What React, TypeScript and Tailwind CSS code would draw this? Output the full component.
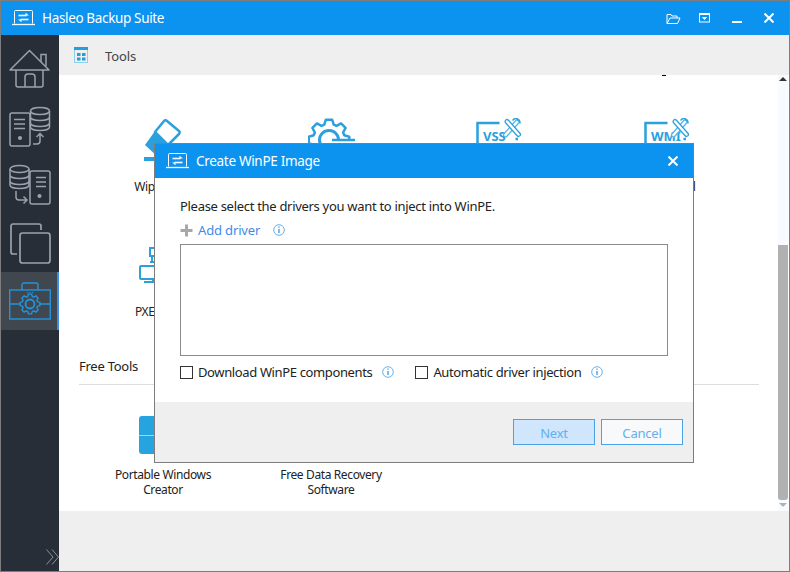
import type { ReactNode } from "react";

const font = "font-['Noto_Sans',sans-serif]";

// builds a cog outline, good enough for the toolbox and the gear tool
function gearPath(cx: number, cy: number, outer: number, inner: number, teeth: number) {
  const step = (Math.PI * 2) / teeth;
  const pts: string[] = [];
  for (let i = 0; i < teeth; i++) {
    const a = i * step - Math.PI / 2;
    const list: [number, number][] = [
      [inner, a - step * 0.38],
      [outer, a - step * 0.2],
      [outer, a + step * 0.2],
      [inner, a + step * 0.38],
    ];
    for (const [r, t] of list) {
      pts.push(`${(cx + r * Math.cos(t)).toFixed(2)} ${(cy + r * Math.sin(t)).toFixed(2)}`);
    }
  }
  return `M${pts.join("L")}Z`;
}

function LaptopIcon() {
  return (
    <svg width="23" height="16" viewBox="0 0 23 16" fill="none" stroke="white" strokeWidth="1">
      <path d="M2.500 13.500V1.500a1 1 0 0 1 1-1h16a1 1 0 0 1 1 1v12" />
      <path d="M0 14.500h23" strokeWidth="1.300" />
      <path d="M6.500 5.500h8" strokeWidth="1.600" />
      <path d="M13.500 2.800 17 5.500h-3.500z" fill="white" stroke="none" />
      <path d="M8.500 9.500h8" strokeWidth="1.600" />
      <path d="M9.500 12.200 6 9.500h3.500z" fill="white" stroke="none" />
    </svg>
  );
}

function HomeIcon() {
  return (
    <svg width="42" height="40" viewBox="0 0 42 40" fill="none" stroke="#9aa3ad" strokeWidth="1.500">
      <path d="M1 21 20.500 1.500 40 21H1Z" strokeLinejoin="round" />
      <path d="M32 13V5.500h5V17" />
      <path d="M7 21v15a2 2 0 0 0 2 2h23a2 2 0 0 0 2-2V21" />
      <path d="M16 38V28a3 3 0 0 1 3-3h4a3 3 0 0 1 3 3v10" />
    </svg>
  );
}

function ServerDbIcon() {
  return (
    <svg width="42" height="42" viewBox="0 0 42 42" fill="none" stroke="#9aa3ad" strokeWidth="1.500">
      <rect x="1" y="7" width="20" height="33" rx="2" />
      <path d="M5 13.500h11M5 18h11M5 22.500h11" />
      <circle cx="11" cy="32" r="1.300" fill="#9aa3ad" />
      <path d="M21.500 5c0-2 4-3.500 9.500-3.500s9.500 1.500 9.500 3.500-4 3.500-9.500 3.500-9.500-1.500-9.500-3.500z" fill="#272e38" />
      <path d="M21.500 5v16c0 2 4 3.500 9.500 3.500s9.500-1.500 9.500-3.500V5M21.500 11c0 2 4 3.500 9.500 3.500s9.500-1.500 9.500-3.500M21.500 17c0 2 4 3.500 9.500 3.500s9.500-1.500 9.500-3.500" />
      <path d="M24 38h4a3 3 0 0 0 3-3v-7M27.500 31l3.500-3.500 3.500 3.500" />
    </svg>
  );
}

function DbServerIcon() {
  return (
    <svg width="42" height="42" viewBox="0 0 42 42" fill="none" stroke="#9aa3ad" strokeWidth="1.500">
      <ellipse cx="10.500" cy="5" rx="9.500" ry="3.500" />
      <path d="M1 5v16c0 2 4 3.500 9.500 3.500S20 23 20 21V5M1 11c0 2 4 3.500 9.500 3.500S20 13 20 11M1 17c0 2 4 3.500 9.500 3.500S20 19 20 17" />
      <rect x="21" y="7" width="20" height="33" rx="2" />
      <path d="M27 13.500h10M27 18h10M27 22.500h10" />
      <circle cx="30.500" cy="32" r="1.300" fill="#9aa3ad" />
      <path d="M7 27v6a3 3 0 0 0 3 3h8M14.500 32.500 18 36l-3.500 3.500" />
    </svg>
  );
}

function CopyIcon() {
  return (
    <svg width="41" height="41" viewBox="0 0 41 41" fill="none" stroke="#9aa3ad" strokeWidth="1.700">
      <path d="M7 31H3a2 2 0 0 1-2-2V3a2 2 0 0 1 2-2h26a2 2 0 0 1 2 2v4" />
      <rect x="10" y="10" width="30" height="30" rx="2.500" />
    </svg>
  );
}

function ToolboxIcon() {
  return (
    <svg width="42" height="38" viewBox="0 0 42 38" fill="none" stroke="#2394dc" strokeWidth="1.400">
      <path d="M13 8V3a2 2 0 0 1 2-2h12a2 2 0 0 1 2 2v5" />
      <rect x="0.700" y="8" width="40.600" height="29" />
      <path d="M1 22h10M31 22h10" />
      <path d="M18 10.500h1.200M20.500 10.500h1.200M23 10.500h1.200" strokeWidth="1" />
      <path d={gearPath(21, 22, 10, 7.800, 8)} />
      <circle cx="21" cy="22" r="4.500" strokeWidth="1.800" />
    </svg>
  );
}

function InfoIcon() {
  return (
    <svg width="12" height="12" viewBox="0 0 12 12" fill="none">
      <circle cx="6" cy="6" r="5.300" stroke="#63b2f0" />
      <path d="M6 5v4M6 2.500v1.200" stroke="#2f8fe0" strokeWidth="1.200" />
    </svg>
  );
}

function EraserIcon() {
  return (
    <svg width="38" height="44" viewBox="0 0 38 44" fill="none">
      <path d="M11 14 20 3a2 2 0 0 1 3 0l12 10a2 2 0 0 1 0 3L24 27z" stroke="#2ba0dd" strokeWidth="2.500" strokeLinejoin="round" />
      <path d="M11 13 25 27 14 39 1 27z" fill="#2ba0dd" />
      <path d="M0 41h36" stroke="#2ba0dd" strokeWidth="4" />
    </svg>
  );
}

function GearIcon() {
  return (
    <svg width="47" height="44" viewBox="0 0 47 44" fill="none" stroke="#2ba0dd" strokeWidth="2.500">
      <path d={gearPath(21, 22, 20.500, 16, 8)} strokeLinejoin="round" />
      <circle cx="21" cy="22" r="9.500" strokeWidth="3" />
      <rect x="24" y="22" width="23" height="18" fill="white" stroke="none" />
      <path d="M24 22h23" strokeWidth="2.500" />
    </svg>
  );
}

function WrenchBadge({ label }: { label: string }) {
  return (
    <svg width="46" height="44" viewBox="0 0 46 44" fill="none" stroke="#2ba0dd" strokeLinecap="round">
      <path d="M1.500 36V5h22" strokeWidth="2.500" strokeLinecap="butt" />
      <text x="7" y="23" fontFamily="'Noto Sans',sans-serif" fontSize="13" fontWeight="700" fill="#2ba0dd" stroke="none">
        {label}
      </text>
      <path d="M29.500 17 41 4" strokeWidth="5" stroke="#5ab6e6" />
      <path d="M29.500 17 41 4" strokeWidth="2.500" stroke="white" />
      <path d="M31 3.500 42.500 16.500" strokeWidth="5" stroke="#2ba0dd" />
      <path d="M31 3.500 42.500 16.500" strokeWidth="2.500" stroke="white" />
      <path d="M37 2a4 4 0 0 1 7 3" strokeWidth="1.500" />
      <path d="M39.500 21h2.500" strokeWidth="2.500" strokeLinecap="butt" />
    </svg>
  );
}

function PxeIcon() {
  return (
    <svg width="48" height="38" viewBox="0 0 48 38" fill="none" stroke="#2ba0dd" strokeWidth="2">
      <rect x="11" y="2" width="24" height="8" />
      <path d="M13 10v6" />
      <rect x="1" y="20" width="26" height="13" rx="1" />
      <path d="M11 16h16M5 36h20M14 33v3" />
    </svg>
  );
}

function ToolItem({ icon, label, iconClass }: { icon: ReactNode; label?: ReactNode; iconClass: string }) {
  return (
    <div className="flex flex-col items-center">
      <div className={`flex items-start justify-center ${iconClass}`}>{icon}</div>
      <div className="min-h-[15px] whitespace-nowrap text-center text-[12px] leading-[15px] tracking-[-0.38px] text-[#222]">{label}</div>
    </div>
  );
}

function CheckRow({ label, gapClass }: { label: string; gapClass: string }) {
  return (
    <label className="flex items-center">
      <span className="h-[13px] w-[13px] border border-[#333] bg-white" />
      <span className="ml-[5px] text-[13px] leading-[18px] tracking-[-0.37px] text-[#222]">{label}</span>
      <span className={`flex ${gapClass}`}>
        <InfoIcon />
      </span>
    </label>
  );
}

export default function App() {
  return (
    <div className={`relative flex h-[572px] w-[790px] flex-col overflow-hidden border border-[#7d7d7d] bg-white ${font}`}>
      {/* Title bar */}
      <div className="flex h-[34px] shrink-0 items-center bg-[#0c93f0] pl-[11px] pr-[15px]">
        <LaptopIcon />
        <span className="ml-[7px] text-[13.500px] tracking-[-0.35px] text-white">Hasleo Backup Suite</span>
        <div className="ml-auto flex items-center">
          <svg width="15" height="11" viewBox="0 0 15 11" fill="none" stroke="white">
            <path d="M1 10.500V1.500h4l1 1.500h5v2M1 10.500h10.500l2.500-5.500H4z" />
          </svg>
          <svg className="ml-[18px]" width="11" height="10" viewBox="0 0 11 10" fill="none" stroke="white">
            <rect x="0.500" y="0.500" width="10" height="8.500" />
            <path d="M1 1.500h9" />
            <path d="M3.500 4.500h4L5.500 6.500z" fill="white" />
          </svg>
          <div className="ml-[22px] mt-[7px] h-[2px] w-[10px] bg-white" />
          <svg className="ml-[22px]" width="10" height="10" viewBox="0 0 10 10" stroke="white" strokeWidth="2">
            <path d="M0.500 0.500l9 9M9.500 0.500l-9 9" />
          </svg>
        </div>
      </div>

      <div className="flex min-h-0 flex-1">
        {/* Sidebar */}
        <div className="flex w-[58px] shrink-0 flex-col bg-[#272e38] pt-[5px]">
          <div className="flex h-[58px] items-center justify-center"><HomeIcon /></div>
          <div className="flex h-[58px] items-center justify-center"><ServerDbIcon /></div>
          <div className="flex h-[58px] items-center justify-center"><DbServerIcon /></div>
          <div className="flex h-[58px] items-center justify-center"><CopyIcon /></div>
          <div className="flex h-[58px] items-center justify-center border-r-2 border-[#3a8ee6] bg-[#40474f] pl-[2px]"><ToolboxIcon /></div>
          <div className="mt-auto flex justify-end pb-[6px]">
            <svg width="13" height="16" viewBox="0 0 13 16" fill="none" stroke="#8b939c">
              <path d="M0.500 0.500 7 8l-6.500 7.500M6 0.500 12.500 8 6 15.500" />
            </svg>
          </div>
        </div>

        {/* Main */}
        <div className="flex min-w-0 flex-1 flex-col">
          <div className="flex h-[40px] shrink-0 items-center bg-[#efefef] pl-[15px]">
            <svg width="14" height="16" viewBox="0 0 14 16" fill="none">
              <rect x="0.500" y="0.500" width="13" height="15" stroke="#8fd0ea" />
              <path d="M0 1.500h14" stroke="#21a0dc" strokeWidth="3" />
              <path d="M3 6h3.500v3H3zM8 6h3.500v3H8zM3 10.500h3.500v3H3zM8 10.500h3.500v3H8z" fill="#21a0dc" />
            </svg>
            <span className="ml-[17px] mt-[3px] text-[13px] tracking-[-0.1px] text-[#444]">Tools</span>
          </div>

          <div className="flex h-[436px] min-h-0 shrink-0">
            <div className="min-w-0 flex-1 pl-[20px]">
              <div className="ml-[583px] h-px w-[4px] bg-black" />
              <div className="grid grid-cols-[repeat(4,168px)] pt-[42px]">
                <ToolItem iconClass="h-[61px]" icon={<EraserIcon />} label="Wipe Drive" />
                <ToolItem iconClass="h-[61px]" icon={<GearIcon />} />
                <ToolItem iconClass="h-[61px]" icon={<WrenchBadge label="VSS" />} />
                <ToolItem iconClass="h-[61px]" icon={<WrenchBadge label="WMI" />} label="WMIC Tool" />
              </div>
              <div className="grid grid-cols-[repeat(4,168px)] pt-[52px]">
                <ToolItem iconClass="h-[58px]" icon={<PxeIcon />} label="PXE Server" />
              </div>
              <div className="mt-[38px] w-[680px] border-b border-[#dddddd] pb-[9px] text-[13px] leading-[18px] tracking-[-0.25px] text-[#222]">Free Tools</div>
              <div className="grid grid-cols-[repeat(4,168px)] pt-[31px]">
                <ToolItem
                  iconClass="h-[51px]"
                  icon={
                    <div className="flex h-[38px] w-[48px] flex-col justify-center rounded-[3px] bg-[#25a4e0]">
                      <div className="h-px bg-[#9fd6f2]" />
                    </div>
                  }
                  label={<>Portable Windows<br />Creator</>}
                />
                <ToolItem iconClass="h-[51px]" icon={null} label={<>Free Data Recovery<br />Software</>} />
              </div>
            </div>

            {/* Scrollbar */}
            <div className="mr-px flex w-[10px] shrink-0 flex-col items-center bg-[#f7fbff] pt-[2px]">
              <div className="h-0 w-0 border-x-[4px] border-b-[4px] border-x-transparent border-b-[#333]" />
              <div className="mt-[164px] h-[255px] w-full rounded-b-[3px] bg-[#b1b1b1]" />
              <div className="mt-[3px] h-0 w-0 border-x-[4px] border-t-[4px] border-x-transparent border-t-[#b1b1b1]" />
            </div>
          </div>

          <div className="flex-1 bg-[#efefef]" />
        </div>
      </div>

      {/* Modal */}
      <div className="absolute left-[153px] top-[142px] flex h-[320px] w-[540px] flex-col border border-[#7d7d7d] bg-white">
        <div className="flex h-[34px] shrink-0 items-center bg-[#0c93f0] pl-[11px] pr-[15px]">
          <LaptopIcon />
          <span className="ml-[7px] text-[13.500px] tracking-[-0.3px] text-white">Create WinPE Image</span>
          <svg className="ml-auto" width="10" height="10" viewBox="0 0 10 10" stroke="white" strokeWidth="2">
            <path d="M0.500 0.500l9 9M9.500 0.500l-9 9" />
          </svg>
        </div>
        <div className="flex flex-1 flex-col px-[25px] pt-[19px]">
          <div className="text-[13px] leading-[18px] tracking-[-0.3px] text-[#222]">Please select the drivers you want to inject into WinPE.</div>
          <div className="mt-[6px] flex h-[18px] items-center">
            <svg width="13" height="13" viewBox="0 0 13 13" stroke="#a8a8a8" strokeWidth="3">
              <path d="M6.500 0.500v12M0.500 6.500h12" />
            </svg>
            <span className="ml-[5px] text-[13px] leading-[18px] tracking-[-0.15px] text-[#3f8be8]">Add driver</span>
            <span className="ml-[13px] flex"><InfoIcon /></span>
          </div>
          <div className="mt-[5px] h-[112px] w-[488px] border border-[#8a8a8a] bg-white" />
          <div className="mt-[7px] flex items-center">
            <CheckRow label="Download WinPE components" gapClass="ml-[10px] mr-[21px]" />
            <CheckRow label="Automatic driver injection" gapClass="ml-[10px]" />
          </div>
        </div>
        <div className="flex h-[60px] shrink-0 items-start justify-end gap-[6px] bg-[#efefef] pr-[10px] pt-[17px]">
          <button className="h-[26px] w-[82px] border border-[#4aa3e8] bg-[#cfe6fc] pt-[3px] text-[13px] tracking-[-0.2px] text-[#62b0ee]">Next</button>
          <button className="h-[26px] w-[82px] border border-[#4aa3e8] bg-[#f7f9fb] pt-[3px] text-[13px] tracking-[-0.2px] text-[#62b0ee]">Cancel</button>
        </div>
      </div>
    </div>
  );
}
